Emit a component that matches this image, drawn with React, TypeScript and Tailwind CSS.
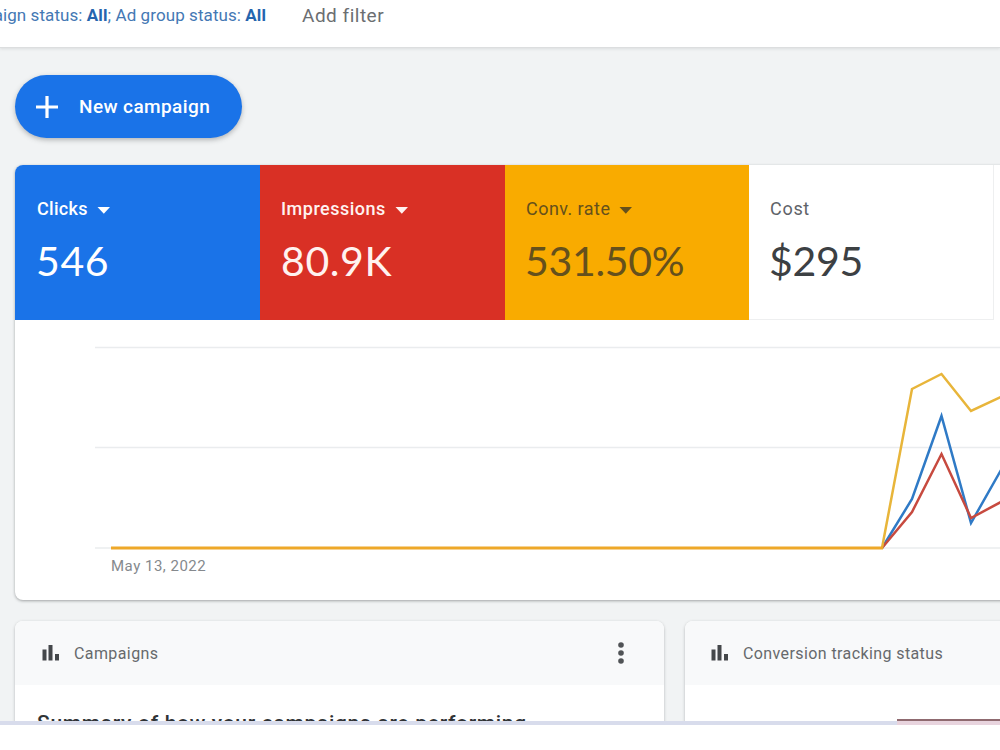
import React from 'react';
import clsx from 'clsx';

const METRICS = [
  {
    label: 'Clicks',
    value: '546',
    menu: true,
    tile: 'w-[245px] bg-[#1a73e8] pl-[22px] text-white',
    labelStyle: 'font-medium tracking-[0.3px]',
    valueStyle: '-ml-px tracking-[0.6px]',
  },
  {
    label: 'Impressions',
    value: '80.9K',
    menu: true,
    tile: 'w-[245px] bg-[#d93025] pl-[21px] text-[#fff2f0]',
    labelStyle: 'font-medium tracking-[0.5px]',
    valueStyle: 'tracking-[0.6px]',
  },
  {
    label: 'Conv. rate',
    value: '531.50%',
    menu: true,
    tile: 'w-[244px] bg-[#f9ab00] pl-[21px] text-[#65501c]',
    labelStyle: 'tracking-[0.45px]',
    valueStyle: '-ml-px tracking-[-0.3px]',
  },
  {
    label: 'Cost',
    value: '$295',
    menu: false,
    tile: 'w-[245px] border-r border-b border-[#eeeff0] bg-white pl-[21px] text-[#3c4043]',
    labelStyle: 'tracking-[0.7px] text-[#5f6368]',
    valueStyle: '-ml-px tracking-[-0.3px]',
  },
];

function BarsIcon() {
  return (
    <svg width="18" height="16" viewBox="0 0 18 16" fill="#44474a">
      <rect x="0.5" y="4.5" width="4" height="11" />
      <rect x="6.5" y="0" width="4" height="15.5" />
      <rect x="13" y="9" width="4" height="6.5" />
    </svg>
  );
}

function MoreIcon() {
  return (
    <svg width="6" height="22" viewBox="0 0 6 22" fill="#505356">
      <circle cx="3" cy="3" r="2.8" />
      <circle cx="3" cy="11" r="2.8" />
      <circle cx="3" cy="19" r="2.8" />
    </svg>
  );
}

function Chart() {
  return (
    <svg className="block" width="985" height="280" viewBox="15 320 985 280" fill="none">
      <g stroke="#eaecee" strokeWidth="1.5">
        <path d="M95 347.5H1000" />
        <path d="M95 447.5H1000" />
        <path d="M95 548H1000" />
      </g>
      <g strokeWidth="2.5" strokeLinejoin="miter">
        <path stroke="#2f7ac6" d="M882 548L912 499L941.5 416L971 523L1001 470" />
        <path stroke="#c74a3f" d="M882 548L912 512L941.5 454L971 518L1001 502" />
        <path stroke="#e8b53a" d="M882 548L912 389L941.5 374L971 411L1001 397" />
      </g>
      <path stroke="#eea829" strokeWidth="3" d="M111 548H883" />
      <text x="111" y="571" fill="#85898d" className="font-['Roboto'] text-[15px] tracking-[0.5px]">
        May 13, 2022
      </text>
    </svg>
  );
}

export default function App() {
  return (
    <div className="h-[750px] w-[1000px] overflow-hidden bg-white font-['Roboto',sans-serif]">
      <header className="relative flex h-12 items-start border-b border-[#dcdedf] pt-[3px] leading-6 shadow-[0_1px_3px_rgba(60,64,67,0.12)]">
        <div className="flex w-[266px] justify-end overflow-hidden text-[17px] tracking-[0.08px] whitespace-pre text-[#4478b4]">
          <span>
            Campaign status: <b className="text-[#2565ae]">All</b>; Ad group status:{' '}
            <b className="text-[#2565ae]">All</b>
          </span>
        </div>
        <div className="mt-px ml-9 text-[19px] tracking-[0.5px] text-[#6b6e71]">Add filter</div>
      </header>

      <main className="flex h-[673px] flex-col overflow-hidden bg-[#f1f3f4] pt-[27px] pl-[15px]">
        <button className="flex h-[63px] w-[227px] shrink-0 items-center rounded-full bg-[#1a73e8] pl-5 text-[19px] font-medium text-white shadow-[0_2px_5px_rgba(60,64,67,0.35)]">
          <svg width="24" height="24" viewBox="0 0 24 24" stroke="#fff" strokeWidth="3.2">
            <path d="M12 1V23M1 12H23" />
          </svg>
          <span className="mt-0.5 ml-5 tracking-[0.4px]">New campaign</span>
        </button>

        <section className="mt-[27px] h-[435px] w-[1000px] shrink-0 overflow-hidden rounded-lg bg-white shadow-[0_1px_3px_rgba(60,64,67,0.45)]">
          <div className="flex h-[155px]">
            {METRICS.map((m) => (
              <div key={m.label} className={clsx('shrink-0 pt-[31px]', m.tile)}>
                <div className={clsx('flex h-6 items-center text-[18px]', m.labelStyle)}>
                  {m.label}
                  {m.menu && (
                    <svg className="mt-[5px] ml-[9px]" width="13" height="7" viewBox="0 0 13 7" fill="currentColor">
                      <path d="M0.5 0H13L6.8 6.7Z" />
                    </svg>
                  )}
                </div>
                <div className={clsx("mt-[17px] font-['Lato'] text-[41px] leading-[48px]", m.valueStyle)}>{m.value}</div>
              </div>
            ))}
          </div>
          <Chart />
        </section>

        <div className="mt-[21px] flex gap-[21px]">
          <section className="h-[140px] w-[649px] shrink-0 overflow-hidden rounded-lg bg-white shadow-[0_1px_3px_rgba(60,64,67,0.35)]">
            <div className="flex h-16 items-center bg-[#f8f9fa] pr-10 pl-[27px] text-[16px] tracking-[0.4px] text-[#66696c]">
              <BarsIcon />
              <span className="mt-0.5 ml-[14px] grow">Campaigns</span>
              <MoreIcon />
            </div>
            <h2 className="pt-[23px] pl-[22px] text-[21px] leading-[30px] font-medium tracking-[0.7px] text-[#303336]">
              Summary of how your campaigns are performing
            </h2>
          </section>
          <section className="h-[140px] w-[649px] shrink-0 overflow-hidden rounded-lg bg-white shadow-[0_1px_3px_rgba(60,64,67,0.35)]">
            <div className="flex h-16 items-center bg-[#f8f9fa] pl-[26px] text-[16px] tracking-[0.4px] text-[#66696c]">
              <BarsIcon />
              <span className="mt-0.5 ml-[14px]">Conversion tracking status</span>
            </div>
          </section>
        </div>
      </main>

      <div className="flex h-1">
        <div className="w-[897px] bg-[#d8dcec]" />
        <div className="-mt-0.5 grow border-t-2 border-[#8f6a70] bg-[#e8d4de]" />
      </div>
    </div>
  );
}
